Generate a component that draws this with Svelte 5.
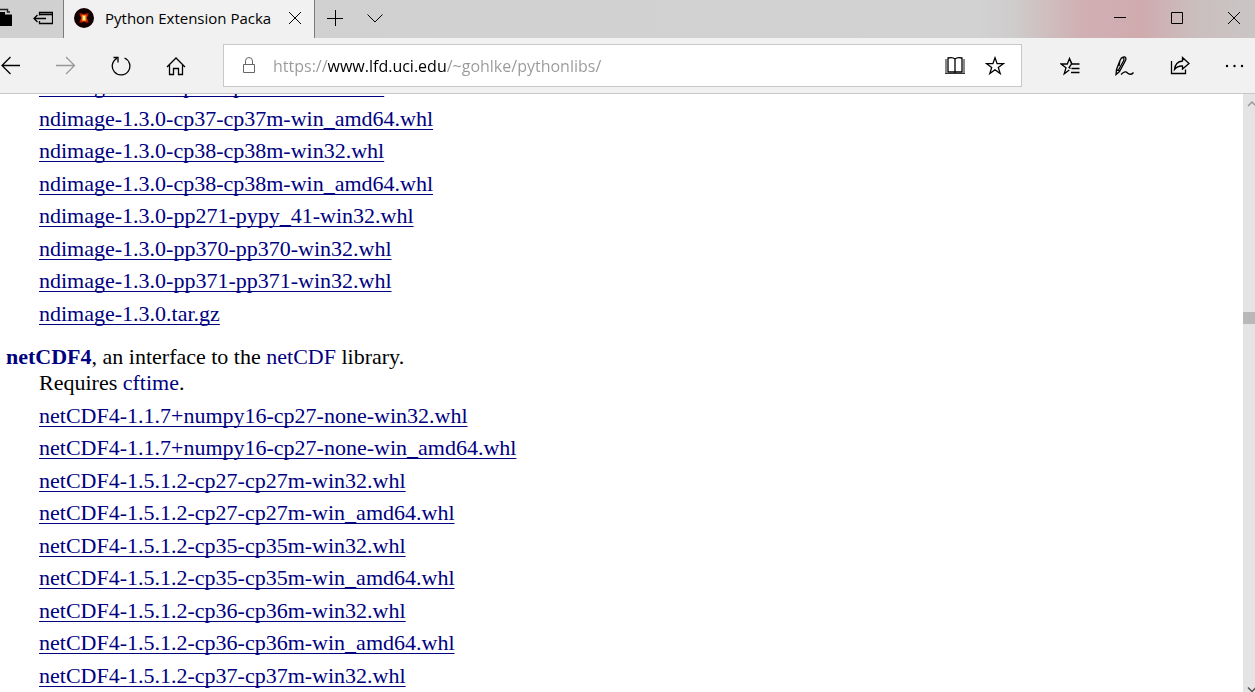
<script lang="ts">
  type Tab = {
    title: string;
    url: string;
  };

  const tab: Tab = {
    title: 'Python Extension Packa',
    url: 'https://www.lfd.uci.edu/~gohlke/pythonlibs/'
  };

  const ndimage = [
    'ndimage-1.3.0-cp37-cp37m-win32.whl',
    'ndimage-1.3.0-cp37-cp37m-win_amd64.whl',
    'ndimage-1.3.0-cp38-cp38m-win32.whl',
    'ndimage-1.3.0-cp38-cp38m-win_amd64.whl',
    'ndimage-1.3.0-pp271-pypy_41-win32.whl',
    'ndimage-1.3.0-pp370-pp370-win32.whl',
    'ndimage-1.3.0-pp371-pp371-win32.whl',
    'ndimage-1.3.0.tar.gz'
  ];

  const netcdf = [
    'netCDF4-1.1.7+numpy16-cp27-none-win32.whl',
    'netCDF4-1.1.7+numpy16-cp27-none-win_amd64.whl',
    'netCDF4-1.5.1.2-cp27-cp27m-win32.whl',
    'netCDF4-1.5.1.2-cp27-cp27m-win_amd64.whl',
    'netCDF4-1.5.1.2-cp35-cp35m-win32.whl',
    'netCDF4-1.5.1.2-cp35-cp35m-win_amd64.whl',
    'netCDF4-1.5.1.2-cp36-cp36m-win32.whl',
    'netCDF4-1.5.1.2-cp36-cp36m-win_amd64.whl',
    'netCDF4-1.5.1.2-cp37-cp37m-win32.whl'
  ];

  let url = $state(tab.url);
</script>

<div class="window">
  <header class="titlebar">
    <div class="tab-tools">
      <button aria-label="Tabs you've set aside">
        <svg width="12" height="20" viewBox="0 0 12 20">
          <path d="M0 1.500H7.500V4H10" fill="none" stroke="#222" stroke-width="1.5" />
          <path d="M0 4H5V6.500H12V18H0z" fill="#000" />
        </svg>
      </button>
      <button aria-label="Set these tabs aside">
        <svg width="20" height="20" viewBox="0 0 20 20" class="line thick">
          <path d="M6.500 7.500V4.500h13v11h-13V13M6.500 6.500h13M1 10.500h12M4.500 7L1 10.500L4.500 14" />
        </svg>
      </button>
    </div>

    <div class="tab">
      <svg class="favicon" width="20" height="20" viewBox="0 0 20 20">
        <defs>
          <radialGradient id="glow">
            <stop offset="0" stop-color="#ff9c1c" />
            <stop offset="0.4" stop-color="#e83a08" />
            <stop offset="0.7" stop-color="#b01804" />
            <stop offset="1" stop-color="#240000" />
          </radialGradient>
        </defs>
        <circle cx="10" cy="10" r="10" fill="#100000" />
        <path d="M3 3L10 6.500L17 3L12.500 10L17 17L10 13.500L3 17L7.500 10z" fill="url(#glow)" />
        <rect x="8" y="7" width="4" height="6" fill="#ff8c1c" />
        <rect x="9" y="8" width="2" height="4" fill="#fff3a0" />
      </svg>
      <span class="tab-title">{tab.title}</span>
      <button class="tab-close" aria-label="Close tab">
        <svg width="14" height="14" viewBox="0 0 14 14" class="line">
          <path d="M1 1L13 13M13 1L1 13" />
        </svg>
      </button>
    </div>

    <button class="tab-action" aria-label="New tab">
      <svg width="16" height="16" viewBox="0 0 16 16" class="line">
        <path d="M8.500 0V16M0 8.500H16" />
      </svg>
    </button>
    <button class="tab-action" aria-label="Show tab previews">
      <svg width="16" height="16" viewBox="0 0 16 16" class="line">
        <path d="M0.500 4.500L8 12L15.500 4.500" />
      </svg>
    </button>

    <div class="window-controls">
      <button aria-label="Minimize">
        <svg width="12" height="12" viewBox="0 0 12 12" class="line"><path d="M0 5.500H12" /></svg>
      </button>
      <button aria-label="Maximize">
        <svg width="12" height="12" viewBox="0 0 12 12" class="line"><path d="M0.500 0.500h11v11h-11z" /></svg>
      </button>
      <button aria-label="Close">
        <svg width="12" height="12" viewBox="0 0 12 12" class="line"><path d="M0 0L12 12M12 0L0 12" /></svg>
      </button>
    </div>
  </header>

  <nav class="toolbar">
    <div class="nav-buttons">
      <button aria-label="Back">
        <svg width="20" height="20" viewBox="0 0 20 20" class="line thick">
          <path d="M19 9.500H1M9.500 1L1 9.500L9.500 18" />
        </svg>
      </button>
      <button aria-label="Forward" class="dimmed">
        <svg width="20" height="20" viewBox="0 0 20 20" class="line thick">
          <path d="M0 9.500H18.500M10 1L18.500 9.500L10 18" />
        </svg>
      </button>
      <button aria-label="Refresh">
        <svg width="20" height="20" viewBox="0 0 20 20" class="line thick">
          <path d="M13.500 2A8.800 8.800 0 1 1 6 2.300M2.500 1.500H7V6.500" />
        </svg>
      </button>
      <button aria-label="Home">
        <svg width="20" height="20" viewBox="0 0 20 20" class="line thick">
          <path d="M1 11L10 2L19 11M3.500 9V18.500H7.500V12.500H12.500V18.500H16.500V9" />
        </svg>
      </button>
    </div>

    <div class="address">
      <svg width="14" height="18" viewBox="0 0 14 18" class="line lock">
        <path d="M1.500 7.500h11v8h-11zM3.500 7.500V4a3.500 3.500 0 0 1 7 0V7.500" />
      </svg>
      <input type="text" aria-label="Address" bind:value={url} spellcheck="false" />
      <button aria-label="Reading view">
        <svg width="20" height="20" viewBox="0 0 20 20" class="line">
          <path d="M1 3V18M19 3V18" stroke="#888" stroke-width="2" />
          <path d="M0 17.500H20" stroke="#333" />
          <path d="M10 3C8.500 1.500 5 1.500 3 2V16H17V2C15 1.500 11.500 1.500 10 3V17" stroke-width="1.3" />
        </svg>
      </button>
      <button aria-label="Add to favorites">
        <svg width="20" height="20" viewBox="0 0 20 20" class="line thick">
          <path d="M10 1.800L12.100 7.700H18.300L13.300 11.400L15.200 17.500L10 13.800L4.800 17.500L6.700 11.400L1.700 7.700H7.900z" />
        </svg>
      </button>
    </div>

    <div class="hub-buttons">
      <button aria-label="Hub">
        <svg width="20" height="20" viewBox="0 0 20 20" class="line thick">
          <path d="M19.500 8H12L9.500 2.500L7.300 8H1.200L6 11.700L4.200 17.800L9.300 14M9.500 2.500L11.600 8L9 11.500L10.500 12.500M11.500 12.500H19.500M11 16.500H19.500" />
        </svg>
      </button>
      <button aria-label="Add notes">
        <svg width="20" height="20" viewBox="0 0 20 20" class="line thick">
          <path d="M5 4.500L1.500 13.500L1 18.500L4.500 15.500L10.500 4.500C11.500 2 10.500 0.500 8.500 1C6 1.500 5.500 3 5 4.500L4 10M8.500 1L9 4L3.500 14M1.500 13.500L4.500 15.500M6 18.500C9 15.500 11 15 12.500 17C14.500 19 17 18.500 18.500 16.500" />
        </svg>
      </button>
      <button aria-label="Share">
        <svg width="20" height="20" viewBox="0 0 20 20" class="line thick">
          <path d="M1.500 5V17.500H15.500V13.500M12.500 1.500L19 7.500L12.500 13V10C9 9.800 6.500 11 4.500 13.500C5 8.500 7.500 5.500 12.500 5z" />
        </svg>
      </button>
      <button aria-label="Settings and more">
        <svg width="20" height="20" viewBox="0 0 20 20">
          <circle cx="2" cy="10" r="1.200" />
          <circle cx="9.500" cy="10" r="1.200" />
          <circle cx="17" cy="10" r="1.200" />
        </svg>
      </button>
    </div>
  </nav>

  <div class="viewport">
    <main class="page">
      <ul class="files">
        {#each ndimage as file}
          <li><a href="#{file}">{file}</a></li>
        {/each}
      </ul>

      <div class="package">
        <p>
          <a class="name" href="#netcdf4">netCDF4</a>, an interface to the
          <a href="#netcdf">netCDF</a> library.
        </p>
        <p class="requires">Requires <a href="#cftime">cftime</a>.</p>
      </div>

      <ul class="files swapped">
        {#each netcdf as file}
          <li><a href="#{file}">{file}</a></li>
        {/each}
      </ul>
    </main>

    <div class="scrollbar">
      <svg width="12" height="18" viewBox="0 0 12 18">
        <path d="M5 12L9 8L13 12" />
      </svg>
      <div class="track"><div class="thumb"></div></div>
      <svg width="12" height="6" viewBox="0 0 12 6" class="down">
        <path d="M5 1.500L9 5.500L13 1.500" />
      </svg>
    </div>
  </div>
</div>

<style>
  :global(body) {
    margin: 0;
    background: #fff;
  }

  .window {
    display: flex;
    flex-direction: column;
    height: 100vh;
    overflow: hidden;
    font-family: 'Open Sans', 'Noto Sans', sans-serif;
  }

  button {
    display: flex;
    align-items: center;
    justify-content: center;
    flex: none;
    margin: 0;
    padding: 0;
    border: none;
    background: none;
    color: #000;
  }

  svg {
    display: block;
    flex: none;
  }

  .line {
    fill: none;
    stroke: currentColor;
    stroke-width: 1;
  }

  .thick {
    stroke-width: 1.3;
  }

  /* Title bar */
  .titlebar {
    display: flex;
    flex: none;
    height: 38px;
    background: linear-gradient(90deg, #d0d0d0 0%, #d2d2d2 78%, #cecbcb 81%, #d0b0b3 86%, #d0abae 91%, #cbbdbd 95%, #c9c6c5 100%);
  }

  .titlebar button {
    padding-bottom: 2px;
  }

  .tab-tools {
    display: flex;
    justify-content: space-between;
    width: 53px;
    padding-right: 10px;
  }

  .tab {
    display: flex;
    align-items: center;
    box-sizing: border-box;
    width: 252px;
    padding: 0 12px 2px 10px;
    border: solid #7a7a7a;
    border-width: 0 1px;
    background: #f1f1f1;
  }

  .tab-title {
    flex: 1;
    margin-left: 11px;
    overflow: hidden;
    font-size: 15px;
    line-height: 20px;
    white-space: nowrap;
  }

  .tab .tab-close {
    padding: 0;
  }

  .tab-action {
    width: 40px;
  }

  .window-controls {
    display: flex;
    margin-left: auto;
    margin-right: -7px;
  }

  .window-controls button {
    width: 57px;
  }

  /* Toolbar */
  .toolbar {
    display: flex;
    align-items: center;
    flex: none;
    height: 55px;
    border-bottom: 1px solid #c8c8c8;
    background: #f1f1f1;
  }

  .nav-buttons,
  .hub-buttons {
    display: flex;
  }

  .nav-buttons {
    margin-left: -17px;
  }

  .hub-buttons {
    margin-right: -7px;
  }

  .nav-buttons button,
  .hub-buttons button {
    width: 55px;
    height: 40px;
  }

  .nav-buttons .dimmed {
    color: #999;
  }

  .address {
    display: flex;
    align-items: center;
    flex: 1;
    box-sizing: border-box;
    height: 43px;
    margin: 0 20px;
    padding: 0 6px 0 18px;
    border: 1px solid #c8c8c8;
    background: #fff;
  }

  .address button {
    width: 40px;
    height: 40px;
  }

  .lock {
    color: #666;
  }

  /* The host is drawn black, the scheme and the path grey */
  .address input {
    flex: 1;
    min-width: 0;
    margin: 0 0 0 17px;
    padding: 0;
    border: none;
    outline: none;
    background: linear-gradient(90deg, #999 55px, #000 55px, #000 173px, #999 173px);
    background-clip: text;
    -webkit-background-clip: text;
    color: transparent;
    font-family: inherit;
    font-size: 16px;
    line-height: 24px;
  }

  /* Web page */
  .viewport {
    display: flex;
    flex: 1;
    min-height: 0;
    overflow: hidden;
  }

  .page {
    flex: 1;
    overflow: hidden;
    color: #000;
    font-family: 'Liberation Serif', 'Times New Roman', serif;
    font-size: 22px;
    line-height: 26px;
  }

  .page a {
    color: #000080;
    text-decoration: none;
  }

  .files {
    margin: 7px 0 0 39px;
    padding: 0;
    list-style: none;
  }

  /* The page is scrolled down into the list */
  .files:first-child {
    margin-top: -21px;
  }

  .files li {
    margin-bottom: 7px;
    white-space: nowrap;
  }

  .files li:nth-child(even),
  .files.swapped li:nth-child(odd) {
    margin-bottom: 6px;
  }

  .files.swapped li:nth-child(even) {
    margin-bottom: 7px;
  }

  .files a {
    text-decoration: underline;
    text-decoration-thickness: 1px;
    text-decoration-skip-ink: none;
    text-underline-offset: 3px;
  }

  .package {
    margin: 17px 0 0 6px;
  }

  .package p {
    margin: 0;
  }

  .package .requires {
    margin-left: 33px;
  }

  .name {
    font-weight: bold;
  }

  .scrollbar {
    display: flex;
    flex-direction: column;
    flex: none;
    width: 12px;
    background: #e4e4e4;
  }

  .scrollbar path {
    fill: none;
    stroke: #999;
    stroke-width: 1.5;
  }

  .scrollbar .down path {
    stroke: #555;
  }

  .track {
    flex: 1;
    padding-top: 200px;
  }

  .thumb {
    height: 12px;
    background: #b8b8b8;
  }
</style>
